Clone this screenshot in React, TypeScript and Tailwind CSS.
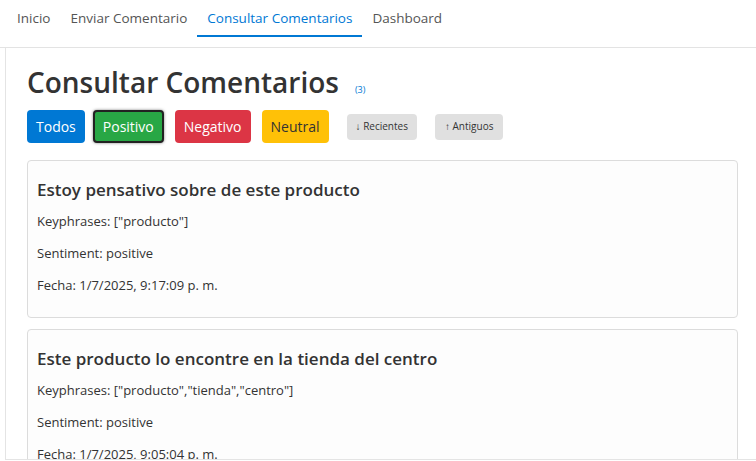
const navItems = ["Inicio", "Enviar Comentario", "Consultar Comentarios", "Dashboard"];

const comentarios = [
  {
    texto: "Estoy pensativo sobre de este producto",
    keyphrases: '["producto"]',
    sentiment: "positive",
    fecha: "1/7/2025, 9:17:09 p. m.",
  },
  {
    texto: "Este producto lo encontre en la tienda del centro",
    keyphrases: '["producto","tienda","centro"]',
    sentiment: "positive",
    fecha: "1/7/2025, 9:05:04 p. m.",
  },
];

export default function App() {
  return (
    <div className="h-[461px] w-[756px] overflow-hidden bg-white font-['Open_Sans',sans-serif] text-[#333]">
      <nav className="flex h-[48px] items-stretch border-b border-[#e3e3e3] pl-[7px]">
        {navItems.map((item) => {
          const active = item === "Consultar Comentarios";
          return (
            <a
              key={item}
              href="#"
              className={
                active
                  ? "flex h-[37px] items-center border-b-2 border-[#0078d4] px-[10px] pt-[2px] text-[13.5px] font-medium text-[#0078d4]"
                  : "flex h-[37px] items-center border-b-2 border-transparent px-[10px] pt-[2px] text-[13.5px] font-medium text-[#555]"
              }
            >
              {item}
            </a>
          );
        })}
      </nav>

      <main className="ml-[5px] h-[412px] overflow-hidden border-b border-l border-[#e4e4e4] pl-[21px] pr-[18px] pt-[16px]">
        <div className="flex items-end">
          <h1 className="text-[28px] font-semibold leading-[36px] text-[#333]">Consultar Comentarios</h1>
          <span className="mb-[4px] ml-[16px] text-[9px] text-[#0078d4]">(3)</span>
        </div>

        <div className="mt-[10px] flex items-center">
          <button className="h-[33px] rounded-[4px] bg-[#0078d4] px-[9px] text-[14px] text-white">Todos</button>
          <button className="ml-[8px] h-[33px] rounded-[4px] border-2 border-[#222] bg-[#28a745] px-[8px] text-[14px] text-white shadow-[0_0_3px_rgba(0,0,0,0.5)]">
            Positivo
          </button>
          <button className="ml-[11px] h-[33px] rounded-[4px] bg-[#dc3545] px-[9px] text-[14px] text-white">Negativo</button>
          <button className="ml-[11px] h-[33px] rounded-[4px] bg-[#ffc107] px-[9px] text-[14px] text-[#333]">Neutral</button>
          <button className="ml-[18px] h-[26px] rounded-[4px] bg-[#e0e0e0] px-[9px] text-[10px] text-[#333]">↓ Recientes</button>
          <button className="ml-[18px] h-[26px] rounded-[4px] bg-[#e0e0e0] px-[10px] text-[10px] text-[#333]">↑ Antiguos</button>
        </div>

        <div className="mt-[17px] flex flex-col gap-[11px]">
          {comentarios.map((c) => (
            <div key={c.fecha} className="rounded-[4px] border border-[#dcdcdc] bg-[#fdfdfd] px-[9px] pt-[10px] pb-[10px]">
              <h3 className="mt-[7px] text-[17px] font-semibold leading-[24px] text-[#333]">{c.texto}</h3>
              <p className="mt-[10px] text-[13px] leading-[19px]">Keyphrases: {c.keyphrases}</p>
              <p className="mt-[13px] text-[13px] leading-[19px]">Sentiment: {c.sentiment}</p>
              <p className="mt-[13px] mb-[12px] text-[13px] leading-[19px]">Fecha: {c.fecha}</p>
            </div>
          ))}
        </div>
      </main>
    </div>
  );
}
